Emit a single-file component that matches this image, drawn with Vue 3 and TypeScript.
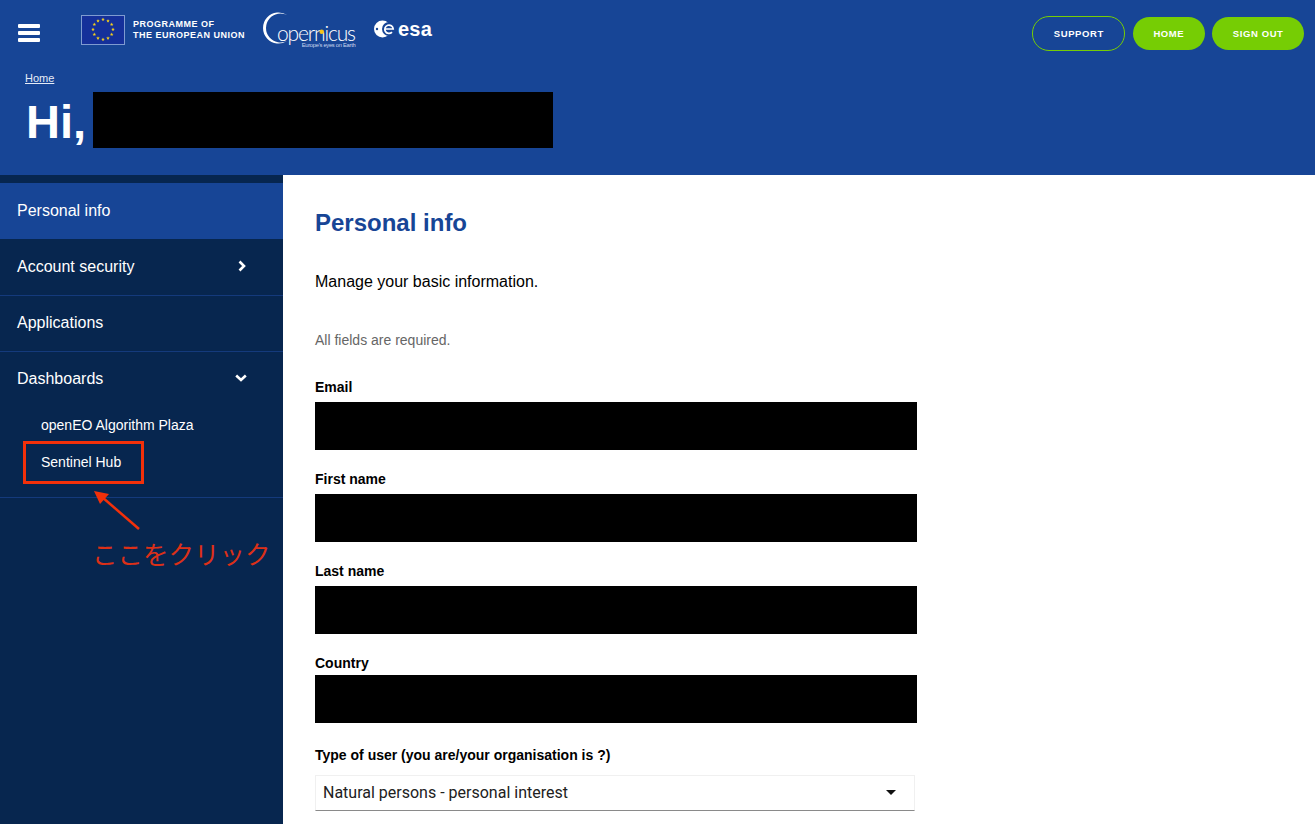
<script setup lang="ts">
interface NavItem {
  label: string
  active?: boolean
  caret?: 'right' | 'down'
  divider?: boolean
}

interface Field {
  label: string
  tight?: boolean
}

const navItems: NavItem[] = [
  { label: 'Personal info', active: true },
  { label: 'Account security', caret: 'right' },
  { label: 'Applications', divider: true },
  { label: 'Dashboards', caret: 'down', divider: true },
]

const subItems = ['openEO Algorithm Plaza', 'Sentinel Hub']

const fields: Field[] = [
  { label: 'Email' },
  { label: 'First name' },
  { label: 'Last name' },
  { label: 'Country', tight: true },
]

// points of one small five-pointed star
function starPoints(cx: number, cy: number, r: number) {
  const pts: string[] = []
  for (let i = 0; i < 10; i++) {
    const a = (i * Math.PI) / 5
    const d = i % 2 === 0 ? r : r * 0.42
    pts.push(`${(cx + d * Math.sin(a)).toFixed(2)},${(cy - d * Math.cos(a)).toFixed(2)}`)
  }
  return pts.join(' ')
}

// the twelve stars on the flag, placed round a circle
const stars = Array.from({ length: 12 }, (_, i) => {
  const angle = (i * Math.PI) / 6
  return starPoints(22 + 10 * Math.sin(angle), 14.5 - 10 * Math.cos(angle), 1.9)
})
</script>

<template>
  <div class="page">
    <header class="header">
      <div class="topbar">
        <button class="burger" aria-label="Menu">
          <span></span>
          <span></span>
          <span></span>
        </button>
        <div class="logos">
          <div class="eu">
            <svg class="eu__flag" width="44" height="30" viewBox="0 0 44 30">
              <rect x="0.5" y="0.5" width="43" height="29" fill="#15309a" stroke="#7f9bd0" />
              <polygon v-for="(s, i) in stars" :key="i" :points="s" fill="#f5d01c" />
            </svg>
            <div class="eu__text">PROGRAMME OF<br />THE EUROPEAN UNION</div>
          </div>
          <svg class="copernicus" width="96" height="36" viewBox="0 0 96 36">
            <path d="M24.700 3.500 A15.500 15.500 0 1 0 24.700 28.500 A14.450 14.450 0 1 1 24.700 3.500 Z" fill="#fff" />
            <text x="14" y="28.700" textLength="79" class="copernicus__name">opernicus</text>
            <circle cx="58.700" cy="19.700" r="2.300" fill="#f5c518" />
            <text x="38.700" y="34.700" textLength="54" class="copernicus__tag">Europe's eyes on Earth</text>
          </svg>
          <div class="esa">
            <svg width="22" height="18" viewBox="0 0 22 18">
              <circle cx="8.500" cy="9" r="8.500" fill="#fff" />
              <circle cx="15" cy="9" r="7" fill="#174596" />
              <path d="M11.500 9 H19.200 A4.200 4.200 0 1 0 18 12.200" fill="none" stroke="#fff" stroke-width="1.700" />
              <circle cx="3" cy="9" r="1.200" fill="#174596" />
            </svg>
            <span class="esa__name">esa</span>
          </div>
        </div>
        <nav class="actions">
          <a class="pill pill--outline">SUPPORT</a>
          <a class="pill">HOME</a>
          <a class="pill">SIGN OUT</a>
        </nav>
      </div>
      <a class="crumb">Home</a>
      <div class="greeting">
        <h1 class="greeting__hi">Hi,</h1>
        <div class="greeting__name"></div>
      </div>
    </header>

    <div class="body">
      <aside class="sidebar">
        <a
          v-for="item in navItems"
          :key="item.label"
          class="nav-item"
          :class="{ 'nav-item--active': item.active, 'nav-item--divider': item.divider }"
        >
          {{ item.label }}
          <svg v-if="item.caret === 'right'" class="caret" width="10" height="12" viewBox="0 0 10 12">
            <path d="M2.500 1.500 L7 6 L2.500 10.500" fill="none" stroke="#fff" stroke-width="2.600" />
          </svg>
          <svg v-if="item.caret === 'down'" class="caret" width="12" height="10" viewBox="0 0 12 10">
            <path d="M1.200 2.500 L6 7 L10.800 2.500" fill="none" stroke="#fff" stroke-width="2.600" />
          </svg>
        </a>
        <div class="subnav">
          <a v-for="sub in subItems" :key="sub" class="subnav__item">{{ sub }}</a>
        </div>

        <!-- annotation drawn over the screenshot -->
        <div class="note-box"></div>
        <svg class="note-arrow" width="60" height="50" viewBox="0 0 60 50">
          <path d="M49 43 L12 11" stroke="#f2300a" stroke-width="2.500" fill="none" />
          <path d="M4 5 L19 8 L10 18 Z" fill="#f2300a" />
        </svg>
        <div class="note-text">ここをクリック</div>
      </aside>

      <main class="content">
        <h2 class="content__title">Personal info</h2>
        <p class="content__lead">Manage your basic information.</p>
        <p class="content__hint">All fields are required.</p>
        <div class="fields">
          <div v-for="field in fields" :key="field.label" class="field">
            <label class="field__label">{{ field.label }}</label>
            <div class="field__value" :class="{ 'field__value--tight': field.tight }"></div>
          </div>
        </div>
        <label class="field__label field__label--select">Type of user (you are/your organisation is ?)</label>
        <div class="select">
          Natural persons - personal interest
          <span class="select__arrow"></span>
        </div>
      </main>
    </div>
  </div>
</template>

<style>
html,
body {
  margin: 0;
  overflow: hidden;
}
</style>

<style scoped>
.page {
  height: 824px;
  overflow: hidden;
  display: flex;
  flex-direction: column;
  font-family: 'Liberation Sans', Arial, sans-serif;
  background: #fff;
}

.header {
  height: 175px;
  flex: none;
  background: #174596;
  color: #fff;
}

.topbar {
  display: flex;
  align-items: flex-start;
  padding: 15px 11px 0 18px;
  height: 57px;
  box-sizing: border-box;
}

.burger {
  width: 22px;
  height: 18px;
  margin-top: 9px;
  padding: 0;
  border: 0;
  background: none;
  display: flex;
  flex-direction: column;
  justify-content: space-between;
}

.burger span {
  display: block;
  height: 4px;
  border-radius: 1px;
  background: #fff;
}

.logos {
  display: flex;
  align-items: flex-start;
  margin-left: 41px;
}

.eu {
  display: flex;
  align-items: center;
  gap: 8px;
}

.eu__flag {
  display: block;
}

.eu__text {
  width: 112px;
  font-size: 9px;
  line-height: 10.500px;
  font-weight: 700;
  letter-spacing: 0.5px;
  white-space: nowrap;
  margin-top: -1px;
}

.copernicus {
  display: block;
  flex: none;
  margin: -3px 0 0 18px;
}

.copernicus__name {
  font-family: Lato, 'Liberation Sans', sans-serif;
  font-size: 21px;
  fill: #fff;
  font-weight: 300;
}

.copernicus__tag {
  font-family: 'Liberation Sans', Arial, sans-serif;
  font-size: 5.800px;
  fill: #c9d6ee;
}

.esa {
  display: flex;
  align-items: center;
  gap: 2px;
  margin: 5px 0 0 15px;
}

.esa svg {
  display: block;
}

.esa__name {
  font-size: 20px;
  line-height: 18px;
  font-weight: 700;
  letter-spacing: 0.2px;
}

.actions {
  display: flex;
  align-items: center;
  gap: 7.500px;
  margin-left: auto;
  height: 37px;
}

.pill {
  display: flex;
  align-items: center;
  justify-content: center;
  height: 33px;
  padding: 0 20.500px;
  border-radius: 17px;
  background: #76cd04;
  font-size: 9.500px;
  font-weight: 700;
  letter-spacing: 0.6px;
  white-space: nowrap;
}

.pill--outline {
  height: 35px;
  box-sizing: border-box;
  background: none;
  border: 1px solid #76cd04;
}

.crumb {
  display: block;
  width: fit-content;
  margin: 15px 0 0 25px;
  font-size: 11px;
  line-height: 13px;
  text-decoration: underline;
  color: #e6ecf7;
}

.greeting {
  display: flex;
  align-items: flex-start;
  gap: 7px;
  margin: 7px 0 0 26px;
}

.greeting__hi {
  margin: 0;
  font-size: 47px;
  line-height: 60px;
  font-weight: 700;
}

.greeting__name {
  width: 460px;
  height: 56px;
  background: #000;
}

.body {
  flex: 1;
  display: flex;
  min-height: 0;
}

.sidebar {
  position: relative;
  flex: none;
  width: 283px;
  padding-top: 8px;
  box-sizing: border-box;
  background: #07264f;
}

.nav-item {
  display: flex;
  align-items: center;
  justify-content: space-between;
  height: 56px;
  box-sizing: border-box;
  padding: 0 36px 0 17px;
  font-size: 16px;
  color: #fff;
}

.nav-item--active {
  background: #174596;
}

.nav-item--divider {
  border-top: 1px solid #143a7c;
  padding-bottom: 1px;
}

.caret {
  display: block;
  margin-top: -3px;
}

.subnav {
  padding: 9px 0 7px 41px;
  border-bottom: 1px solid #143a7c;
}

.subnav__item {
  display: block;
  height: 37px;
  line-height: 18px;
  font-size: 14px;
  color: #fff;
}

.note-box {
  position: absolute;
  left: 23px;
  top: 266px;
  width: 121px;
  height: 43px;
  box-sizing: border-box;
  border: 3px solid #f2300a;
}

.note-arrow {
  position: absolute;
  left: 90px;
  top: 311px;
}

.note-text {
  position: absolute;
  left: 92px;
  top: 360px;
  font-family: 'Noto Sans CJK JP', sans-serif;
  font-size: 25.500px;
  line-height: 36px;
  font-weight: 400;
  color: #dc3018;
  white-space: nowrap;
}

.content {
  flex: 1;
  padding: 33px 0 0 32px;
  color: #000;
}

.content__title {
  margin: 0;
  font-size: 24px;
  line-height: 30px;
  font-weight: 700;
  color: #174596;
}

.content__lead {
  margin: 34px 0 0;
  font-size: 16px;
  line-height: 20px;
}

.content__hint {
  margin: 39px 0 0;
  font-size: 14px;
  line-height: 18px;
  color: #666;
}

.fields {
  display: flex;
  flex-direction: column;
  gap: 20px;
  margin-top: 29px;
}

.field__label {
  display: block;
  font-size: 14px;
  line-height: 18px;
  font-weight: 700;
}

.field__value {
  width: 602px;
  height: 48px;
  margin-top: 6px;
  background: #000;
}

.field__value--tight {
  margin-top: 3px;
}

.field__label--select {
  margin-top: 23px;
}

.select {
  display: flex;
  align-items: center;
  justify-content: space-between;
  width: 600px;
  height: 36px;
  margin-top: 11px;
  padding: 0 18px 2px 7px;
  box-sizing: border-box;
  border: 1px solid #f0f0f0;
  border-bottom: 1px solid #8a8a8a;
  font-family: Roboto, 'Liberation Sans', sans-serif;
  font-size: 16px;
  color: #212121;
}

.select__arrow {
  width: 0;
  height: 0;
  border-left: 5px solid transparent;
  border-right: 5px solid transparent;
  border-top: 5px solid #111;
}
</style>
